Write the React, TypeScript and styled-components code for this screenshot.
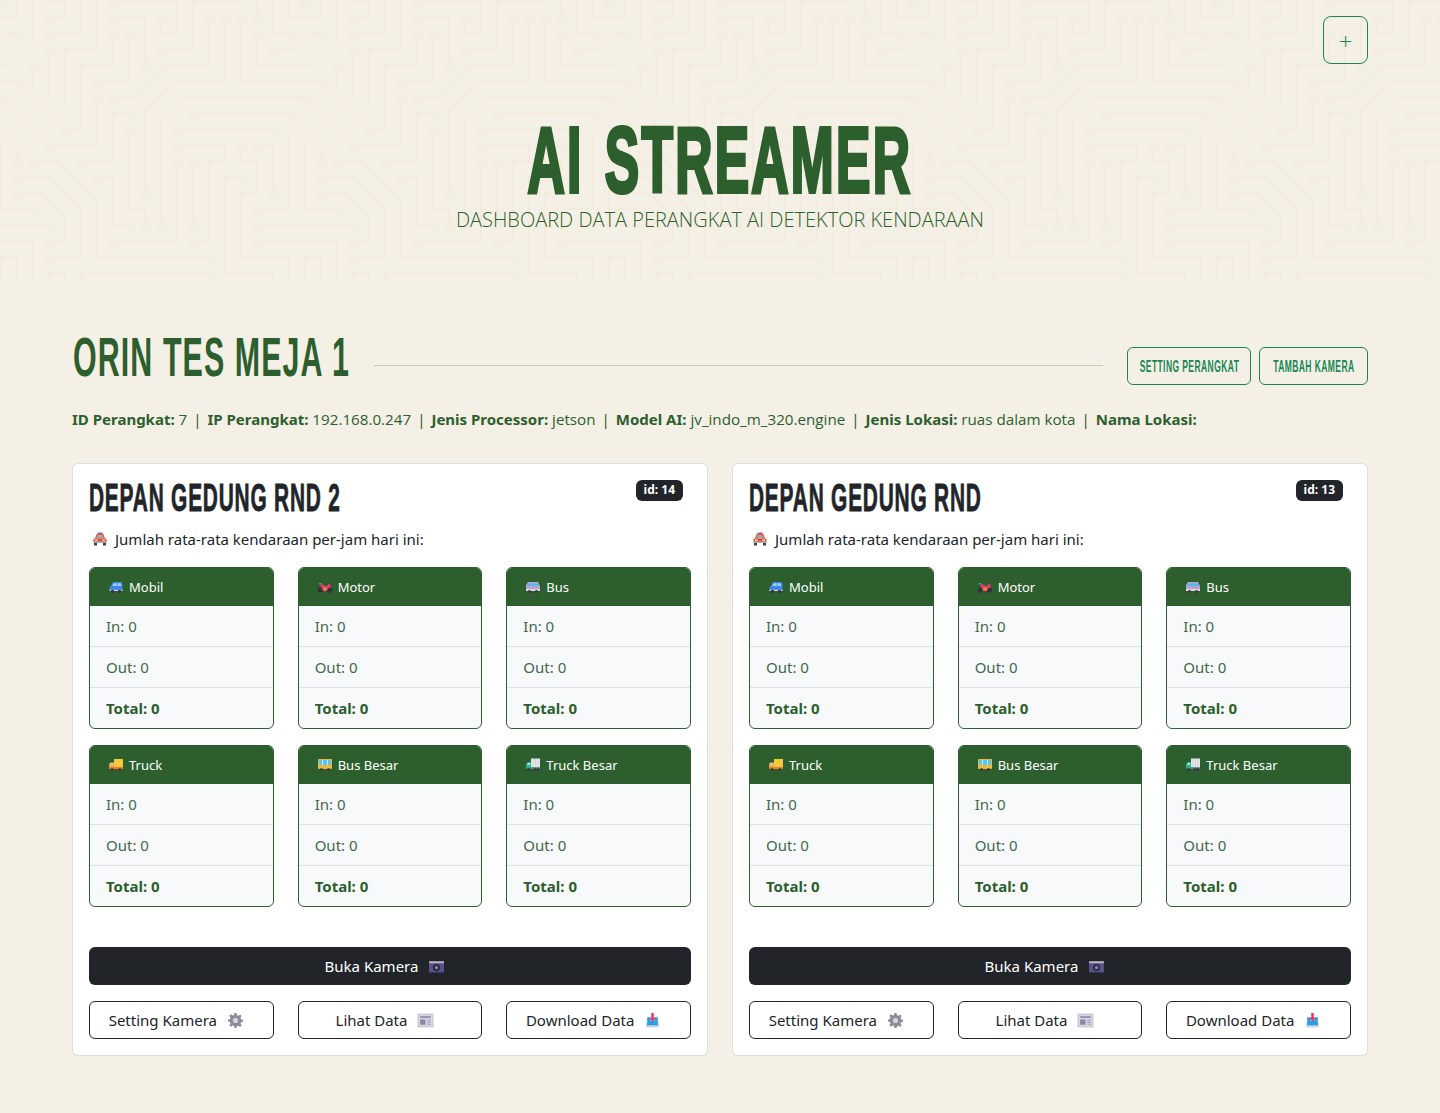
import React from "react";
import styled, { createGlobalStyle } from "styled-components";

const GREEN = "#2c5f2d";
const TEAL = "#198754";
const DARK = "#212529";
const PAPER = "#f4f0e6";
const TRACE = "#f3ecdd";

// one tile of the circuit board background, 304 x 304
const traces = [
  "M49 225H0", "M209 273H82", "M257 225H304", "M257 241H304", "M273 129H177", "M17 81H0", "M193 113H289",
  "M257 17V0", "M193 225V161", "M241 17V81H304", "M257 33V65H304", "M129 129V209H145V225", "M129 113H113V161H81",
  "M113 241H177V161", "M97 177H113V225H129", "M65 289V273H49V304", "M241 177H225V273H273V304", "M257 145H273V193",
  "M193 241H209V161H225V145H177", "M289 33H273V0", "M97 97V145H49", "M49 33H81V0", "M113 33V65H81V129H65",
  "M97 81H129V33", "M113 17H145V65", "M225 289H97V304", "M241 145V161H257V193H241V257H289V304", "M49 17H65V1H48",
  "M161 49H193V1H242", "M113 1H177V33H161V17", "M113 97H137.4L169.4 65H209V17", "M145 193V112L176 81H225V17",
  "M161 225V121L185 97H305", "M17 161V153L65 105V49H97V0", "M49 49V97L1 145V209H33", "M33 65V89L-1 123",
  "M17 33H9L-1 43", "M273 49H297L305 41", "M257 209H289V137L305 121", "M49 241H65V217L41 193H17",
  "M209 257H97V201L57 161H33", "M49 257H81V209L49 177H17", "M33 0V41L9 65H0", "M1 305V257H17V304", "M33 304V241H0",
  "M0 17H17V0", "M289 0V17H304", "M241 304V289H257V304", "M81 273V304",
];
const nodes = [
  [49,225],[209,273],[257,225],[257,241],[273,129],[177,129],[17,81],[193,113],[289,113],[257,17],[193,225],[193,161],
  [241,17],[257,33],[129,129],[145,225],[129,113],[81,161],[113,241],[177,161],[97,177],[129,225],[65,289],[241,177],
  [257,145],[273,193],[193,241],[177,145],[289,33],[97,97],[49,145],[49,33],[113,33],[65,129],[97,81],[129,33],[113,17],
  [145,65],[225,289],[241,145],[49,17],[161,49],[113,1],[161,17],[113,97],[209,17],[145,193],[225,17],[161,225],[305,97],
  [1,97],[17,161],[49,49],[33,209],[33,65],[17,33],[273,49],[257,209],[49,241],[17,193],[209,257],[33,161],[49,257],
  [17,177],[1,305],[1,1],[305,1],[305,305],[113,305],
];
const tile = `<svg xmlns="http://www.w3.org/2000/svg" width="304" height="304" viewBox="0 0 304 304"><g fill="none" stroke="${TRACE}" stroke-width="2"><path d="${traces.join("")}"/>${nodes
  .map(([x, y]) => `<circle cx="${x}" cy="${y}" r="4" fill="${PAPER}"/>`)
  .join("")}</g></svg>`;

const GlobalStyle = createGlobalStyle`
  * { box-sizing: border-box; }
  body {
    margin: 0;
    min-height: 1113px;
    background: ${PAPER};
    color: ${DARK};
    font-family: "Noto Sans", "Open Sans", sans-serif;
  }
`;

const Hero = styled.header`
  position: relative;
  height: 280px;
  display: flex;
  flex-direction: column;
  align-items: center;
  padding-top: 114px;
  background-image: url("data:image/svg+xml,${encodeURIComponent(tile)}");
`;
const AddButton = styled.button`
  position: absolute;
  top: 16px;
  right: 72px;
  width: 45px;
  height: 48px;
  background: transparent;
  border: 1px solid ${TEAL};
  border-radius: 8px;
  color: ${TEAL};
  font: 300 24px "Open Sans", sans-serif;
  padding: 0;
`;
const HeroTitle = styled.h1`
  margin: 0;
  height: 92px;
  line-height: 92px;
  font-family: "Liberation Sans", sans-serif;
  font-size: 92px;
  font-weight: 700;
  letter-spacing: 4px;
  word-spacing: 8px;
  white-space: nowrap;
  color: ${GREEN};
  -webkit-text-stroke: 4px ${GREEN};
  transform: scaleX(0.561);
`;
const HeroSub = styled.p`
  margin: 0;
  font-family: "Open Sans", sans-serif;
  font-size: 20px;
  font-weight: 300;
  line-height: 27px;
  color: ${GREEN};
`;

const Main = styled.main`
  padding: 53px 72px 0;
`;
const DeviceHead = styled.div`
  display: flex;
  align-items: center;
  height: 60px;
`;
const DeviceName = styled.h2`
  margin: 0 0 12px;
  flex: 0 0 302px;
  min-width: 0;
  font-family: "Liberation Sans", sans-serif;
  font-size: 56px;
  font-weight: 700;
  letter-spacing: 2px;
  line-height: 60px;
  white-space: nowrap;
  color: ${GREEN};
  transform: translateX(1px) scaleX(0.543);
  transform-origin: left center;
`;
const Rule = styled.hr`
  flex: 1;
  height: 1px;
  margin: 4px 16px 0 0;
  border: 0;
  background: #bfcfb6;
`;
const HeadButton = styled.button<{ $w: number }>`
  flex: none;
  width: ${(p) => p.$w}px;
  height: 38px;
  margin: 6px 0 0 8px;
  padding: 0;
  display: flex;
  align-items: center;
  justify-content: center;
  background: transparent;
  border: 1px solid ${TEAL};
  border-radius: 6px;
  color: ${TEAL};
  font: 700 16.5px "Liberation Sans", sans-serif;
  letter-spacing: 0.8px;
  white-space: nowrap;
  span {
    display: inline-block;
    transform: scaleX(0.516);
  }
`;
const Info = styled.p`
  margin: 14px 0 32px;
  font-size: 15px;
  line-height: 24px;
  color: ${GREEN};
  white-space: nowrap;
  b { font-weight: 700; }
  span { font-weight: 400; font-size: 15.2px; font-family: "Open Sans", sans-serif; }
`;
const Sep = styled.i`
  margin: 0 6px;
  font-style: normal;
`;
const Cards = styled.div`
  display: grid;
  grid-template-columns: 1fr 1fr;
  gap: 24px;
`;
const Card = styled.section`
  position: relative;
  height: 593px;
  padding: 16px;
  background: #fff;
  border: 1px solid rgba(0, 0, 0, 0.125);
  border-radius: 6px;
`;
const Badge = styled.span`
  position: absolute;
  top: 16px;
  right: 24px;
  padding: 0 8px;
  height: 21px;
  line-height: 20px;
  border-radius: 6px;
  background: ${DARK};
  color: #fff;
  font-size: 12px;
  font-weight: 700;
`;
const CardTitle = styled.h3`
  margin: -1px 0 0;
  height: 38px;
  font-family: "Liberation Sans", sans-serif;
  font-size: 39px;
  font-weight: 700;
  letter-spacing: 1.5px;
  line-height: 38px;
  white-space: nowrap;
  color: ${DARK};
  -webkit-text-stroke: 0.8px ${DARK};
  transform: scaleX(0.535);
  transform-origin: left center;
`;
const Lead = styled.p`
  display: flex;
  align-items: center;
  gap: 7px;
  margin: 10px 0 16px;
  padding-left: 3px;
  font-size: 15px;
  line-height: 24px;
  color: ${DARK};
`;
const Grid3 = styled.div`
  display: grid;
  grid-template-columns: repeat(3, 1fr);
  column-gap: 24px;
  row-gap: 16px;
`;
const Stat = styled.div`
  border: 1px solid ${GREEN};
  border-radius: 6px;
  overflow: hidden;
  background: #f8f9fa;
`;
const StatHead = styled.div`
  height: 38px;
  display: flex;
  align-items: center;
  gap: 5px;
  padding-left: 18px;
  background: ${GREEN};
  color: #fff;
  font-size: 13px;
`;
const StatRow = styled.div<{ $total?: boolean }>`
  height: ${(p) => (p.$total ? 40 : 41)}px;
  padding-left: 16px;
  display: flex;
  align-items: center;
  font-size: 15px;
  font-weight: ${(p) => (p.$total ? 700 : 400)};
  color: ${(p) => (p.$total ? GREEN : "#42694c")};
  border-bottom: ${(p) => (p.$total ? "0" : "1px solid #dee2e6")};
`;
const Actions = styled.div`
  margin-top: 40px;
`;
const OpenButton = styled.button`
  width: 100%;
  height: 38px;
  display: flex;
  align-items: center;
  justify-content: center;
  gap: 10px;
  margin-bottom: 16px;
  padding: 0 10px 0 0;
  background: ${DARK};
  color: #fff;
  border: 0;
  border-radius: 6px;
  font: 400 15px "Noto Sans", sans-serif;
`;
const OutlineButton = styled.button`
  height: 38px;
  display: flex;
  align-items: center;
  justify-content: center;
  gap: 10px;
  background: #fff;
  color: ${DARK};
  border: 1px solid ${DARK};
  border-radius: 6px;
  padding: 0 10px 0 0;
  font: 400 15px "Noto Sans", sans-serif;
  white-space: nowrap;
`;
const Icon = styled.svg`
  flex: none;
  width: 16px;
  height: 16px;
  button & {
    width: 17px;
    height: 17px;
  }
`;

const CarFront = () => (
  <Icon viewBox="0 0 16 16">
    <rect x="5.500" y="1.500" width="2.500" height="1.500" fill="#3f8fe8" />
    <rect x="8" y="1.500" width="2.500" height="1.500" fill="#e8384f" />
    <path d="M4.500 3h7l1.500 4.500H3z" fill="#e2593f" />
    <path d="M5.500 4h5l1 3h-7z" fill="#9aa9b8" />
    <rect x="1.500" y="7.500" width="13" height="4.500" rx="1" fill="#d8553f" />
    <rect x="3" y="8.500" width="2.500" height="1.500" fill="#f4d9a0" />
    <rect x="10.500" y="8.500" width="2.500" height="1.500" fill="#f4d9a0" />
    <rect x="1.500" y="10.500" width="13" height="1.500" fill="#aeb4bc" />
    <rect x="2" y="12" width="3" height="2.500" fill="#3a3f47" />
    <rect x="11" y="12" width="3" height="2.500" fill="#3a3f47" />
  </Icon>
);
const Suv = () => (
  <Icon viewBox="0 0 16 16">
    <path d="M5 3h8.500l1 3v6H1.500V8.500L3 7z" fill="#3f86ea" />
    <path d="M5.700 4.200h3V7H4.200zM9.500 4.200h3.300l.6 2.800H9.500z" fill="#9fd0f5" />
    <rect x="1.500" y="10.800" width="13" height="1.200" fill="#c9d4ea" />
    <circle cx="4.500" cy="12.500" r="1.800" fill="#3a3346" />
    <circle cx="11.500" cy="12.500" r="1.800" fill="#3a3346" />
  </Icon>
);
const Bike = () => (
  <Icon viewBox="0 0 16 16">
    <circle cx="3.500" cy="11" r="2.700" fill="#33303c" />
    <circle cx="12.500" cy="11" r="2.700" fill="#33303c" />
    <rect x="2" y="4" width="2.500" height="1.500" fill="#3fa7a0" />
    <path d="M3 5.500h4l1 1.500h2l1.500-2H13l1 3-3 1.500-1 2.500H6L4 8z" fill="#e23b6a" />
    <rect x="6.500" y="8.500" width="3.200" height="3" fill="#f08a2c" />
  </Icon>
);
const Van = () => (
  <Icon viewBox="0 0 16 16">
    <path d="M3 3h10l2 4v5H1V6z" fill="#b9a4cf" />
    <path d="M3 4.500h10.500l1 2.500H2z" fill="#58b6e8" />
    <rect x="1" y="10" width="14" height="2" fill="#d9d6de" />
    <circle cx="4.500" cy="12.500" r="1.600" fill="#3a3346" />
    <circle cx="11.500" cy="12.500" r="1.600" fill="#3a3346" />
  </Icon>
);
const TruckIcon = () => (
  <Icon viewBox="0 0 16 16">
    <path d="M6 2h9v8H6z" fill="#f6c93d" />
    <path d="M2 5.500h4V10H1V7.500z" fill="#f6a53a" />
    <path d="M2.500 6.300h2.600v1.800H2z" fill="#a8d8f0" />
    <rect x="1" y="10" width="14" height="2" fill="#ee7d2b" />
    <circle cx="4" cy="12.500" r="1.600" fill="#4b3a3a" />
    <circle cx="12" cy="12.500" r="1.600" fill="#4b3a3a" />
  </Icon>
);
const BigBus = () => (
  <Icon viewBox="0 0 16 16">
    <rect x="1" y="2" width="14" height="10" rx="1" fill="#f0b93a" />
    <rect x="2" y="3" width="12" height="5" fill="#58c4f0" />
    <path d="M5.500 3v5M10.500 3v5" stroke="#e9f6fc" strokeWidth="0.800" />
    <circle cx="4.500" cy="12.500" r="1.600" fill="#3f3a40" />
    <circle cx="11.500" cy="12.500" r="1.600" fill="#3f3a40" />
  </Icon>
);
const BigTruck = () => (
  <Icon viewBox="0 0 16 16">
    <rect x="6" y="1.500" width="9" height="9" fill="#e6e6ee" />
    <path d="M8 2v8M10.500 2v8M13 2v8" stroke="#c3c3d2" strokeWidth="0.700" />
    <path d="M2.500 5H6v6H1V7.500z" fill="#25b98a" />
    <path d="M3 6h2v2H2z" fill="#aee3ef" />
    <rect x="1" y="10.500" width="14" height="1.500" fill="#3f8f78" />
    <circle cx="3.500" cy="12.500" r="1.500" fill="#3b3744" />
    <circle cx="10" cy="12.500" r="1.500" fill="#3b3744" />
    <circle cx="13" cy="12.500" r="1.500" fill="#3b3744" />
  </Icon>
);
const Camera = () => (
  <Icon viewBox="0 0 16 16">
    <rect x="1" y="3" width="14" height="2.500" fill="#b8b4c0" />
    <rect x="1" y="5" width="14" height="8.500" fill="#5a5290" />
    <circle cx="8" cy="9" r="3.400" fill="#2f2a3c" />
    <circle cx="8" cy="9" r="1.500" fill="#8b84b8" />
  </Icon>
);
const Gear = () => (
  <Icon viewBox="0 0 16 16">
    <path
      d="M7 1h2l.4 2 1.300.5L12.400 2.400l1.400 1.400-1.100 1.700.5 1.300 1.800.4v2l-1.800.4-.5 1.300 1.100 1.700-1.400 1.400-1.700-1.100-1.300.5L9 15H7l-.4-1.800-1.300-.5-1.700 1.100-1.400-1.400 1.100-1.700-.5-1.300L1 9V7l1.800-.4.5-1.300-1.100-1.700 1.400-1.400 1.700 1.100 1.300-.5z"
      fill="#8f8b9c"
    />
    <circle cx="8" cy="8" r="2.400" fill="#d6d4dc" />
  </Icon>
);
const News = () => (
  <Icon viewBox="0 0 16 16">
    <rect x="1" y="2" width="14" height="12" fill="#d9d5e4" stroke="#bdb8cb" strokeWidth="0.800" />
    <rect x="3" y="4" width="10" height="1.500" fill="#8d879f" />
    <rect x="3" y="7" width="5" height="5" fill="#8d879f" />
    <path d="M9.500 7.500H13M9.500 9.500H13M9.500 11.500H13" stroke="#a5a0b5" strokeWidth="1" />
  </Icon>
);
const Download = () => (
  <Icon viewBox="0 0 16 16">
    <path d="M2 10h12v4.500H2z" fill="#c9d3dc" />
    <path d="M3 5h3v3h4V5h3v7.500H3z" fill="#2a9fe0" />
    <path d="M6.800 1h2.400v4.500H11.500L8 9 4.500 5.500h2.300z" fill="#e8386a" />
  </Icon>
);

const vehicles = [
  { name: "Mobil", icon: <Suv /> },
  { name: "Motor", icon: <Bike /> },
  { name: "Bus", icon: <Van /> },
  { name: "Truck", icon: <TruckIcon /> },
  { name: "Bus Besar", icon: <BigBus /> },
  { name: "Truck Besar", icon: <BigTruck /> },
];
const cameras = [
  { id: 14, name: "DEPAN GEDUNG RND 2" },
  { id: 13, name: "DEPAN GEDUNG RND" },
];

const App = () => {
  return (
    <>
      <GlobalStyle />
      <Hero>
        <AddButton>+</AddButton>
        <HeroTitle>AI STREAMER</HeroTitle>
        <HeroSub>DASHBOARD DATA PERANGKAT AI DETEKTOR KENDARAAN</HeroSub>
      </Hero>
      <Main>
        <DeviceHead>
          <DeviceName>ORIN TES MEJA 1</DeviceName>
          <Rule />
          <HeadButton $w={124}>
            <span>SETTING PERANGKAT</span>
          </HeadButton>
          <HeadButton $w={109}>
            <span>TAMBAH KAMERA</span>
          </HeadButton>
        </DeviceHead>
        <Info>
          <b>ID Perangkat:</b> <span>7</span>
          <Sep>|</Sep>
          <b>IP Perangkat:</b> <span>192.168.0.247</span>
          <Sep>|</Sep>
          <b>Jenis Processor:</b> <span>jetson</span>
          <Sep>|</Sep>
          <b>Model AI:</b> <span>jv_indo_m_320.engine</span>
          <Sep>|</Sep>
          <b>Jenis Lokasi:</b> <span>ruas dalam kota</span>
          <Sep>|</Sep>
          <b>Nama Lokasi:</b>
        </Info>
        <Cards>
          {cameras.map((cam) => (
            <Card key={cam.id}>
              <Badge>id: {cam.id}</Badge>
              <CardTitle>{cam.name}</CardTitle>
              <Lead>
                <CarFront />
                Jumlah rata-rata kendaraan per-jam hari ini:
              </Lead>
              <Grid3>
                {vehicles.map((v) => (
                  <Stat key={v.name}>
                    <StatHead>
                      {v.icon}
                      {v.name}
                    </StatHead>
                    <StatRow>In: 0</StatRow>
                    <StatRow>Out: 0</StatRow>
                    <StatRow $total>Total: 0</StatRow>
                  </Stat>
                ))}
              </Grid3>
              <Actions>
                <OpenButton>
                  Buka Kamera <Camera />
                </OpenButton>
                <Grid3>
                  <OutlineButton>
                    Setting Kamera <Gear />
                  </OutlineButton>
                  <OutlineButton>
                    Lihat Data <News />
                  </OutlineButton>
                  <OutlineButton>
                    Download Data <Download />
                  </OutlineButton>
                </Grid3>
              </Actions>
            </Card>
          ))}
        </Cards>
      </Main>
    </>
  );
};

export default App;
